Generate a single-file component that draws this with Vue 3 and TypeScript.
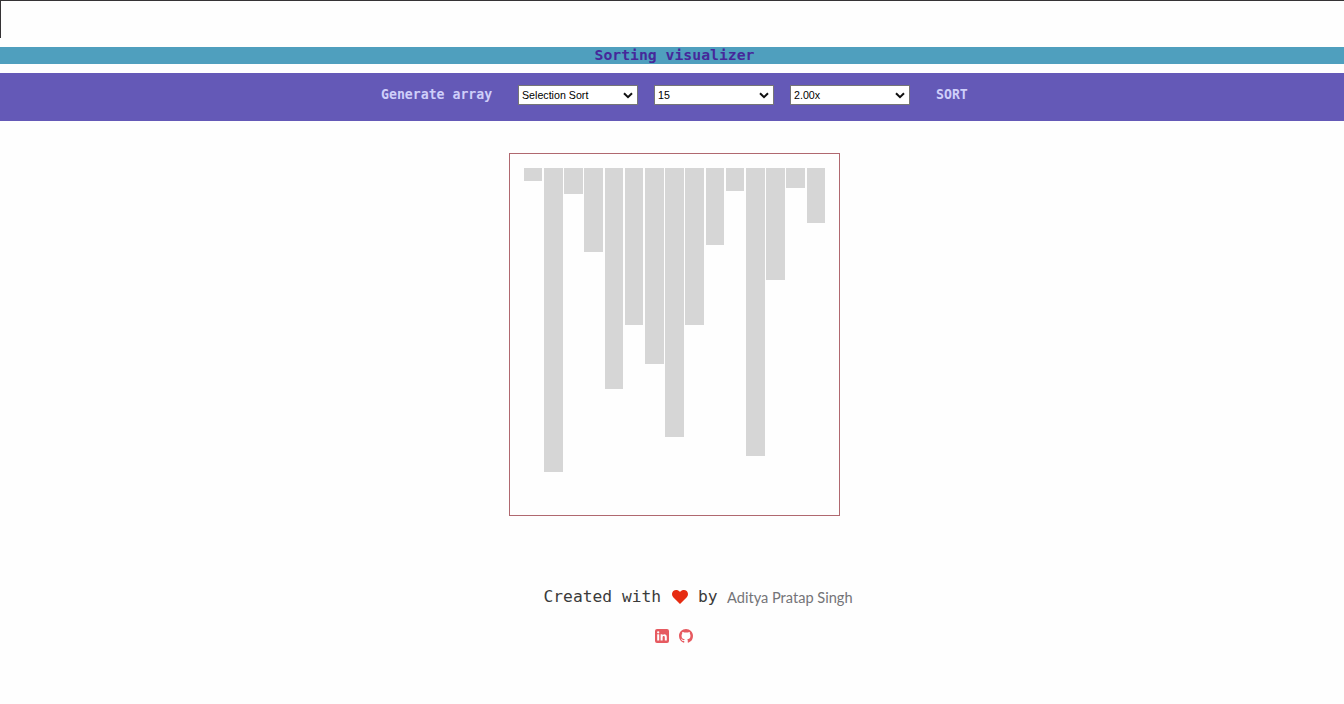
<script setup lang="ts">
import { ref } from 'vue'

interface Picker {
  name: string
  value: string
  options: string[]
}

const pickers = ref<Picker[]>([
  { name: 'Algorithm', value: 'Selection Sort', options: ['Selection Sort', 'Bubble Sort', 'Insertion Sort', 'Merge Sort', 'Quick Sort'] },
  { name: 'Array size', value: '15', options: ['5', '10', '15', '20', '30'] },
  { name: 'Speed', value: '2.00x', options: ['0.50x', '1.00x', '2.00x', '4.00x'] },
])

const bars = ref<number[]>([13, 304, 26, 84, 221, 157, 196, 269, 157, 77, 23, 288, 112, 20, 55])

function generate(): void {
  bars.value = bars.value.map(() => Math.round(10 + Math.random() * 300))
}

function sort(): void {
  bars.value = [...bars.value].sort((a, b) => a - b)
}
</script>

<template>
  <div class="page">
    <div class="corner"></div>
    <h1 class="title"><span>Sorting visualizer</span></h1>
    <nav class="nav">
      <a class="action generate" @click="generate">Generate array</a>
      <div class="pickers">
        <label v-for="p in pickers" :key="p.name" class="picker">
          <select v-model="p.value" :aria-label="p.name">
            <option v-for="o in p.options" :key="o">{{ o }}</option>
          </select>
          <svg class="chevron" viewBox="0 0 10 7" aria-hidden="true">
            <path d="M1 1.2 L5 5.2 L9 1.2" />
          </svg>
        </label>
      </div>
      <a class="action sort" @click="sort">SORT</a>
    </nav>
    <main class="board">
      <div v-for="(h, i) in bars" :key="i" class="bar" :style="{ height: h + 'px' }"></div>
    </main>
    <footer>
      <p class="credit">
        <span class="mono created">Created with</span>
        <svg class="heart" viewBox="0 0 16 14" aria-hidden="true">
          <path d="M8 14 L1.2 7.2 C-.5 5.3-.3 2.6 1.3 1.1 C3.1-.5 6-.3 8 2 C10-.3 12.9-.5 14.7 1.1 C16.3 2.6 16.5 5.3 14.8 7.2 Z" />
        </svg>
        <span class="mono by">by</span>
        <span class="author">Aditya Pratap Singh</span>
      </p>
      <div class="social">
        <svg viewBox="0 0 14 14" aria-label="LinkedIn">
          <path fill-rule="evenodd" d="M2 0h10a2 2 0 0 1 2 2v10a2 2 0 0 1-2 2H2a2 2 0 0 1-2-2V2a2 2 0 0 1 2-2zM2.2 5.3v6.3h2V5.3zM3.2 2.2a1.15 1.15 0 1 0 0 2.3 1.15 1.15 0 0 0 0-2.3zM5.6 5.3v6.3h2V8.5c0-1.9 2.2-1.9 2.2 0v3.1h2V7.9c0-3.1-3-3.4-4.2-1.7v-.9z" />
        </svg>
        <svg viewBox="0 0 16 16" aria-label="GitHub">
          <path d="M8 0C3.58 0 0 3.58 0 8c0 3.54 2.29 6.53 5.47 7.59.4.07.55-.17.55-.38 0-.19-.01-.82-.01-1.49-2.01.37-2.53-.49-2.69-.94-.09-.23-.48-.94-.82-1.13-.28-.15-.68-.52-.01-.53.63-.01 1.08.58 1.23.82.72 1.21 1.87.87 2.33.66.07-.52.28-.87.51-1.07-1.78-.2-3.64-.89-3.64-3.95 0-.87.31-1.59.82-2.15-.08-.2-.36-1.02.08-2.12 0 0 .67-.21 2.2.82a7.6 7.6 0 0 1 4 0c1.53-1.04 2.2-.82 2.2-.82.44 1.1.16 1.92.08 2.12.51.56.82 1.27.82 2.15 0 3.07-1.87 3.75-3.65 3.95.29.25.54.73.54 1.48 0 1.07-.01 1.93-.01 2.2 0 .21.15.46.55.38A8.01 8.01 0 0 0 16 8c0-4.42-3.58-8-8-8z" />
        </svg>
      </div>
    </footer>
  </div>
</template>

<style>
body {
  margin: 0;
  background: #fefefe;
}
</style>

<style scoped>
.page {
  height: 704px;
  overflow: hidden;
  border-top: 1px solid #353335;
  box-sizing: border-box;
}
.corner {
  height: 37px;
  border-left: 1px solid #353335;
}
.title {
  margin: 9px 0;
  height: 17px;
  background: #4f9fbe;
  color: #46289a;
  font: bold 14.75px/15px "DejaVu Sans Mono", monospace;
  text-align: center;
  padding-left: 5px;
}
.nav {
  height: 48px;
  box-sizing: border-box;
  padding: 12px 0 0 381px;
  background: #6459b7;
  display: flex;
  align-items: flex-start;
}
.action {
  font: bold 13.2px/19px "DejaVu Sans Mono", monospace;
  color: #cfcffa;
  cursor: pointer;
  white-space: nowrap;
}
.generate {
  width: 137px;
}
.sort {
  margin-left: 26px;
}
.pickers {
  display: flex;
  gap: 16px;
}
.picker {
  display: grid;
  width: 120px;
  height: 20px;
}
.picker select {
  grid-area: 1 / 1;
  appearance: none;
  box-sizing: border-box;
  width: 120px;
  height: 20px;
  margin: 0;
  padding: 0 3px;
  border: 1px solid #767676;
  border-radius: 0;
  background: #fff;
  color: #000;
  font: 10.67px "Liberation Sans", Arial, sans-serif;
}
.chevron {
  grid-area: 1 / 1;
  justify-self: end;
  align-self: center;
  width: 10px;
  height: 7px;
  margin-right: 5px;
  pointer-events: none;
}
.chevron path {
  fill: none;
  stroke: #101010;
  stroke-width: 2;
}
.board {
  box-sizing: border-box;
  width: 331px;
  height: 363px;
  margin: 32px 0 0 509px;
  padding: 14px 13.8px;
  border: 1px solid #b0686f;
  display: flex;
  align-items: flex-start;
  gap: 1.67px;
}
.bar {
  flex: none;
  width: 18.56px;
  background: #d6d6d6;
}
.credit {
  display: flex;
  align-items: center;
  height: 24px;
  margin: 69px 0 0 543.5px;
}
.mono {
  font: 16.3px/24px "DejaVu Sans Mono", monospace;
  color: #3a3a3a;
  white-space: pre;
}
.created {
  width: 128px;
}
.heart {
  width: 16px;
  height: 14px;
  fill: #e62c12;
}
.by {
  width: 29px;
  margin-left: 10.5px;
}
.author {
  font: 14.6px/24px Lato, sans-serif;
  color: #747478;
  padding-top: 2px;
}
.social {
  display: flex;
  gap: 10px;
  margin: 20px 0 0 655px;
}
.social svg {
  width: 14px;
  height: 14px;
  fill: #e65a60;
}
</style>
